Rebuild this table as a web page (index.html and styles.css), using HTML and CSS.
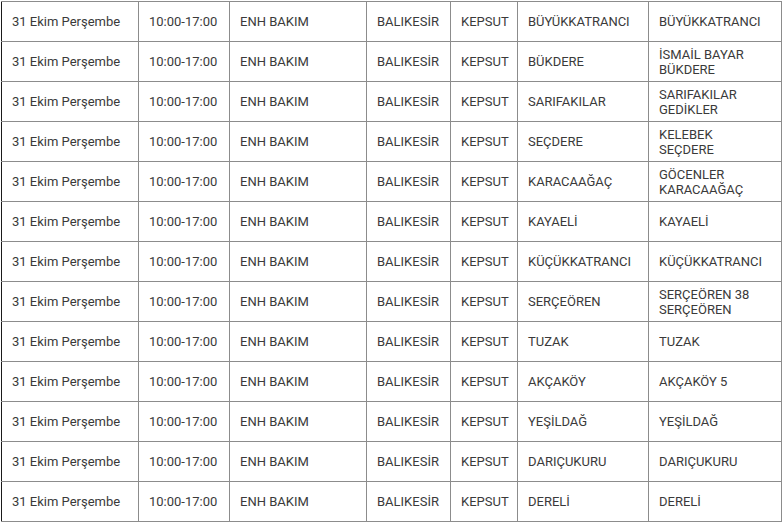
FILE: index.html
```html
<!DOCTYPE html>
<html lang="tr">
<head>
<meta charset="utf-8">
<link rel="stylesheet" href="styles.css">
</head>
<body>
<table class="outages">
<colgroup>
<col class="c-date"><col class="c-time"><col class="c-type"><col class="c-city"><col class="c-dist"><col class="c-area"><col class="c-street">
</colgroup>
<tbody>
<tr><td>31 Ekim Perşembe</td><td>10:00-17:00</td><td>ENH BAKIM</td><td>BALIKESİR</td><td>KEPSUT</td><td>BÜYÜKKATRANCI</td><td>BÜYÜKKATRANCI</td></tr>
<tr><td>31 Ekim Perşembe</td><td>10:00-17:00</td><td>ENH BAKIM</td><td>BALIKESİR</td><td>KEPSUT</td><td>BÜKDERE</td><td>İSMAİL BAYAR<br>BÜKDERE</td></tr>
<tr><td>31 Ekim Perşembe</td><td>10:00-17:00</td><td>ENH BAKIM</td><td>BALIKESİR</td><td>KEPSUT</td><td>SARIFAKILAR</td><td>SARIFAKILAR<br>GEDİKLER</td></tr>
<tr><td>31 Ekim Perşembe</td><td>10:00-17:00</td><td>ENH BAKIM</td><td>BALIKESİR</td><td>KEPSUT</td><td>SEÇDERE</td><td>KELEBEK<br>SEÇDERE</td></tr>
<tr><td>31 Ekim Perşembe</td><td>10:00-17:00</td><td>ENH BAKIM</td><td>BALIKESİR</td><td>KEPSUT</td><td>KARACAAĞAÇ</td><td>GÖCENLER<br>KARACAAĞAÇ</td></tr>
<tr><td>31 Ekim Perşembe</td><td>10:00-17:00</td><td>ENH BAKIM</td><td>BALIKESİR</td><td>KEPSUT</td><td>KAYAELİ</td><td>KAYAELİ</td></tr>
<tr><td>31 Ekim Perşembe</td><td>10:00-17:00</td><td>ENH BAKIM</td><td>BALIKESİR</td><td>KEPSUT</td><td>KÜÇÜKKATRANCI</td><td>KÜÇÜKKATRANCI</td></tr>
<tr><td>31 Ekim Perşembe</td><td>10:00-17:00</td><td>ENH BAKIM</td><td>BALIKESİR</td><td>KEPSUT</td><td>SERÇEÖREN</td><td>SERÇEÖREN 38<br>SERÇEÖREN</td></tr>
<tr><td>31 Ekim Perşembe</td><td>10:00-17:00</td><td>ENH BAKIM</td><td>BALIKESİR</td><td>KEPSUT</td><td>TUZAK</td><td>TUZAK</td></tr>
<tr><td>31 Ekim Perşembe</td><td>10:00-17:00</td><td>ENH BAKIM</td><td>BALIKESİR</td><td>KEPSUT</td><td>AKÇAKÖY</td><td>AKÇAKÖY 5</td></tr>
<tr><td>31 Ekim Perşembe</td><td>10:00-17:00</td><td>ENH BAKIM</td><td>BALIKESİR</td><td>KEPSUT</td><td>YEŞİLDAĞ</td><td>YEŞİLDAĞ</td></tr>
<tr><td>31 Ekim Perşembe</td><td>10:00-17:00</td><td>ENH BAKIM</td><td>BALIKESİR</td><td>KEPSUT</td><td>DARIÇUKURU</td><td>DARIÇUKURU</td></tr>
<tr><td>31 Ekim Perşembe</td><td>10:00-17:00</td><td>ENH BAKIM</td><td>BALIKESİR</td><td>KEPSUT</td><td>DERELİ</td><td>DERELİ</td></tr>
</tbody>
</table>
</body>
</html>
```
FILE: styles.css
```css
html, body {
  margin: 0;
  padding: 0;
  background: #ffffff;
}
body {
  font-family: Roboto, "Liberation Sans", sans-serif;
  font-size: 13px;
  color: #3a3a3a;
}
.outages {
  border-collapse: collapse;
  table-layout: fixed;
  width: 781px;
  margin: 1px 0 0 1px;
}
.outages td {
  border: 1px solid #8c8c8c;
  height: 40px;
  padding: 0 10px;
  box-sizing: border-box;
  line-height: 15px;
  vertical-align: middle;
  white-space: nowrap;
}
.outages td:first-child {
  border-left-color: #1a1a1a;
}
.c-date { width: 137px; }
.c-time { width: 91px; }
.c-type { width: 137px; }
.c-city { width: 84px; }
.c-dist { width: 67px; }
.c-area { width: 131px; }
.c-street { width: 133px; }
```
